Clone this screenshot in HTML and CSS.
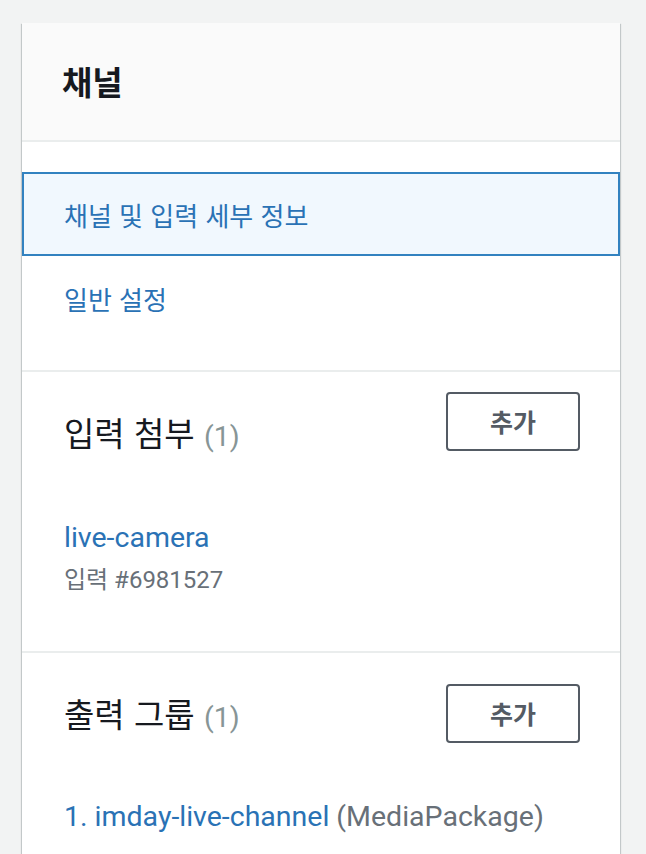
FILE: index.html
```html
<!DOCTYPE html>
<html lang="ko">
<head>
<meta charset="utf-8">
<title>채널</title>
<link rel="stylesheet" href="styles.css">
</head>
<body>
<div class="card">
  <div class="card-header">
    <h2 class="card-title">채널</h2>
  </div>
  <nav class="nav">
    <a class="nav-item nav-item--active" href="#">채널 및 입력 세부 정보</a>
    <a class="nav-item" href="#">일반 설정</a>
  </nav>
  <section class="section section--inputs">
    <div class="section-head">
      <h3 class="section-title section-title--low">입력 첨부 <span class="count">(1)</span></h3>
      <button class="btn">추가</button>
    </div>
    <div class="entry entry--inputs">
      <a class="link" href="#">live-camera</a>
      <div class="meta">입력 #6981527</div>
    </div>
  </section>
  <section class="section section--outputs">
    <div class="section-head">
      <h3 class="section-title section-title--mid">출력 그룹 <span class="count">(1)</span></h3>
      <button class="btn">추가</button>
    </div>
    <div class="entry entry--outputs">
      <a class="link" href="#">1. imday-live-channel</a> <span class="muted">(MediaPackage)</span>
    </div>
  </section>
</div>
</body>
</html>
```

FILE: styles.css
```css
* { box-sizing: border-box; }
html, body { margin: 0; padding: 0; }
body {
  background: #f2f3f3;
  font-family: Roboto, "Noto Sans CJK KR", sans-serif;
  color: #16191f;
  padding: 23px 26px 0 22px;
  height: 854px;
  overflow: hidden;
}
.card {
  background: #ffffff;
  box-shadow: 0 1px 1px 0 rgba(0,28,36,.3), 1px 1px 1px 0 rgba(0,28,36,.15), -1px 1px 1px 0 rgba(0,28,36,.15);
  width: 598px;
}
.card-header {
  background: #fafafa;
  height: 119px;
  border-bottom: 2px solid #eaeded;
  display: flex;
  align-items: center;
  padding: 0 40px;
}
.card-title {
  margin: 0;
  font-family: "Noto Sans CJK KR", sans-serif;
  font-size: 33px;
  font-weight: 700;
  color: #16191f;
  line-height: 1;
}
.nav {
  display: flex;
  flex-direction: column;
  padding: 30px 0;
  border-bottom: 2px solid #eaeded;
}
.nav-item {
  display: flex;
  align-items: center;
  height: 84px;
  padding: 0 40px;
  border: 2px solid transparent;
  color: #2a72b5;
  text-decoration: none;
  font-family: "Noto Sans CJK KR", sans-serif;
  font-size: 26px;
}
.nav-item--active {
  background: #f1f8fe;
  border-color: #3282c0;
}
.section {
  border-bottom: 2px solid #eaeded;
  padding: 0 40px 0 42px;
}
.section--inputs { height: 281px; padding-top: 20px; }
.section--outputs { height: 201px; padding-top: 31px; border-bottom: 0; }
.section-head {
  display: flex;
  justify-content: space-between;
  align-items: flex-start;
}
.section-title {
  margin: 0;
  font-family: "Noto Sans CJK KR", sans-serif;
  font-weight: 400;
  font-size: 33px;
  line-height: 40px;
  color: #16191f;
}
.section-title--low { margin-top: 20px; }
.section-title--mid { margin-top: 9px; }
.count {
  font-family: Roboto, sans-serif;
  color: #879596;
  font-size: 28.5px;
}
.btn {
  width: 134px;
  height: 59px;
  border: 2px solid #545b64;
  border-radius: 4px;
  background: #ffffff;
  color: #545b64;
  font-family: "Noto Sans CJK KR", sans-serif;
  font-weight: 700;
  font-size: 25px;
  line-height: 1;
  padding: 0;
}
.entry--inputs { margin-top: 63px; }
.entry--outputs { margin-top: 56px; font-size: 28px; line-height: 36px; }
.link {
  color: #2a72b5;
  text-decoration: none;
  font-size: 28.5px;
  line-height: 36px;
}
.meta {
  color: #687078;
  font-size: 24px;
  line-height: 30px;
  margin-top: 9px;
}
.muted { color: #687078; font-size: 28.5px; }
```
